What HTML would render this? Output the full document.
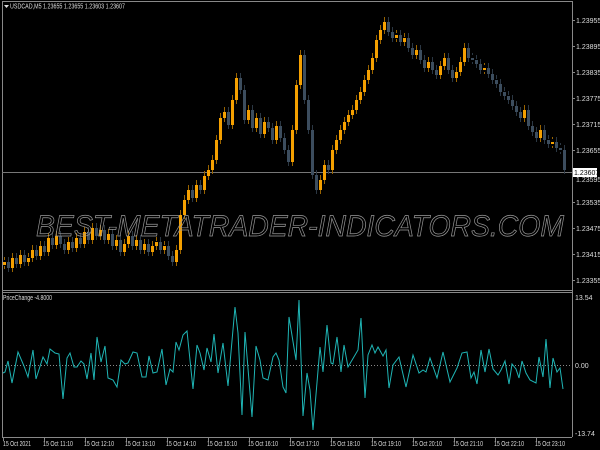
<!DOCTYPE html>
<html><head><meta charset="utf-8"><style>
html,body{margin:0;padding:0;background:#000;width:600px;height:450px;overflow:hidden}
svg{display:block}
text{font-family:"Liberation Sans",sans-serif;font-size:7px;fill:#ddd}
</style></head><body>
<svg width="600" height="450" viewBox="0 0 600 450">
<rect width="600" height="450" fill="#000"/>
<g fill="none" stroke="#888" stroke-width="1">
<line x1="2" y1="1.5" x2="572" y2="1.5"/>
<line x1="2.5" y1="1" x2="2.5" y2="437"/>
<line x1="572.5" y1="1" x2="572.5" y2="437"/>
<line x1="2" y1="290.5" x2="572" y2="290.5"/>
<line x1="2" y1="292.5" x2="572" y2="292.5"/>
<line x1="2" y1="437.5" x2="572" y2="437.5"/>
<line x1="2" y1="172.5" x2="572" y2="172.5" stroke="#777"/>
<path d="M572 20.5h3M572 46.5h3M572 72.5h3M572 98.5h3M572 124.5h3M572 150.5h3M572 176.5h3M572 202.5h3M572 228.5h3M572 254.5h3M572 280.5h3"/>
<path d="M3.5 437v4M44.5 437v4M85.5 437v4M126.5 437v4M167.5 437v4M208.5 437v4M249.5 437v4M290.5 437v4M331.5 437v4M372.5 437v4M413.5 437v4M454.5 437v4M495.5 437v4M536.5 437v4"/>
</g>
<line x1="2" y1="365.5" x2="572" y2="365.5" stroke="#888" stroke-dasharray="1,2"/>

<defs>
<path id="po" d="M4 262V265M12 258V268M20 255V264M28 258V262M32 250V258M40 246V256M48 238V252M56 236V245M68 242V250M76 238V248M84 232V244M92 228V240M100 230V236M108 234V240M116 240V246M124 244V252M128 236V244M136 240V246M144 244V250M152 246V252M156 242V246M164 246V250M176 250V262M180 215V250M184 200V215M188 190V200M196 185V198M204 176V190M208 170V176M212 160V170M216 140V160M220 118V140M224 112V118M232 100V125M236 78V100M248 110V120M256 118V128M264 122V134M276 126V140M292 130V162M296 85V130M300 55V85M320 180V190M324 165V180M332 150V170M336 140V150M340 130V140M344 122V130M348 115V122M352 110V115M356 100V110M360 92V100M364 80V92M368 70V80M372 58V70M376 40V58M380 30V40M384 22V30M396 35V38M404 38V42M416 50V55M428 62V68M440 66V75M444 58V66M456 72V78M460 62V72M464 48V62M484 68V70M524 110V118M540 130V138M552 142V144"/>
<path id="pb" d="M8 262V268M16 258V264M24 255V262M36 250V256M44 246V252M52 238V245M60 236V244M64 244V250M72 242V248M80 238V244M88 232V240M96 228V236M104 230V240M112 234V246M120 240V252M132 236V246M140 240V250M148 244V252M160 242V250M168 246V256M172 256V262M192 190V198M200 185V190M228 112V125M240 78V90M244 90V120M252 110V128M260 118V134M268 122V128M272 128V140M280 126V138M284 138V150M288 150V162M304 55V100M308 100V130M312 130V175M316 175V190M328 165V170M388 22V32M392 32V38M400 35V42M408 38V48M412 48V55M420 50V60M424 60V68M432 62V70M436 70V75M448 58V70M452 70V78M468 48V58M472 58V60M476 60V64M480 64V70M488 68V74M492 74V80M496 80V84M500 84V92M504 92V96M508 96V100M512 100V106M516 106V112M520 112V118M528 110V126M532 126V132M536 132V138M544 130V140M548 140V144M556 142V148M560 148V150M564 150V170"/>
</defs>
<g fill="none" stroke="#9a6400" stroke-width="1">
<use href="#po" transform="translate(0.5,-5)"/><use href="#po" transform="translate(0.5,4)"/>
</g>
<g fill="none" stroke="#2b3743" stroke-width="1">
<use href="#pb" transform="translate(0.5,-5)"/><use href="#pb" transform="translate(0.5,4)"/>
</g>
<g fill="none" stroke="#f5a000" stroke-width="3"><use href="#po" transform="translate(0.5,0)"/></g>
<g fill="none" stroke="#3c4d5e" stroke-width="3"><use href="#pb" transform="translate(0.5,0)"/></g>

<polyline fill="none" stroke="#1fb5b5" stroke-width="1" points="3,373 5,372 8,361 12,383 18,352 24,366 28,377 33,350 36,379 43,357 47,364 50,349 55,353 59,354 63,399 67,358 70,353 74,367 77,367 81,361 84,364 87,379 91,353 94,380 97,337 101,362 105,346 108,378 113,380 117,387 121,360 125,364 128,363 133,352 137,353 142,377 146,377 149,356 153,373 157,372 162,349 166,385 170,369 173,372 176,342 179,350 183,335 187,331 193,389 197,345 200,353 204,370 207,348 211,362 214,334 218,373 223,343 228,386 235,307 238,333 242,415 245,332 252,417 256,346 260,360 263,378 268,380 273,357 276,353 279,360 283,387 286,393 289,317 296,360 299,300 303,416 307,373 310,390 313,430 320,347 323,372 327,325 331,363 333,364 337,337 341,372 344,345 348,367 358,350 361,318 365,398 368,355 372,345 375,353 378,347 383,356 386,350 389,388 393,365 399,357 406,387 413,355 419,373 423,370 426,372 430,358 437,378 443,352 450,382 457,368 462,353 467,352 471,378 474,372 477,384 481,350 485,372 489,349 493,369 498,375 501,370 505,361 509,384 512,364 516,369 519,378 522,361 526,373 530,380 536,383 539,357 543,377 546,339 550,388 553,358 557,372 560,368 563,389"/>

<text x="36" y="236" textLength="528" lengthAdjust="spacingAndGlyphs" style="fill:none;stroke:#999;stroke-width:0.7;font-size:30px;font-style:italic">BEST-METATRADER-INDICATORS.COM</text>
<path d="M4 5h5l-2.5 3z" fill="#ddd"/>
<text x="10" y="8.5" textLength="115" lengthAdjust="spacingAndGlyphs">USDCAD,M5  1.23655 1.23655 1.23603 1.23607</text>
<text x="3" y="300" textLength="49" lengthAdjust="spacingAndGlyphs">PriceChange -4.8000</text>
<g>
<text x="576" y="23">1.23955</text><text x="576" y="49">1.23895</text><text x="576" y="75">1.23835</text><text x="576" y="101">1.23775</text><text x="576" y="127">1.23715</text><text x="576" y="153">1.23655</text><text x="576" y="182">1.23595</text><text x="576" y="205">1.23535</text><text x="576" y="231">1.23475</text><text x="576" y="257">1.23415</text><text x="576" y="283">1.23355</text>
</g>
<rect x="573" y="168" width="24" height="9" fill="#fff"/>
<text x="574" y="175" style="fill:#000">1.23607</text>
<text x="575" y="300">13.54</text>
<text x="575" y="368">0.00</text>
<text x="575" y="436">-13.74</text>
<g>
<text x="3" y="446" textLength="28" lengthAdjust="spacingAndGlyphs">15 Oct 2021</text>
<text x="43" y="446" textLength="30" lengthAdjust="spacingAndGlyphs">15 Oct 11:10</text>
<text x="84" y="446" textLength="30" lengthAdjust="spacingAndGlyphs">15 Oct 12:10</text>
<text x="125" y="446" textLength="30" lengthAdjust="spacingAndGlyphs">15 Oct 13:10</text>
<text x="166" y="446" textLength="30" lengthAdjust="spacingAndGlyphs">15 Oct 14:10</text>
<text x="207" y="446" textLength="30" lengthAdjust="spacingAndGlyphs">15 Oct 15:10</text>
<text x="248" y="446" textLength="30" lengthAdjust="spacingAndGlyphs">15 Oct 16:10</text>
<text x="289" y="446" textLength="30" lengthAdjust="spacingAndGlyphs">15 Oct 17:10</text>
<text x="330" y="446" textLength="30" lengthAdjust="spacingAndGlyphs">15 Oct 18:10</text>
<text x="371" y="446" textLength="30" lengthAdjust="spacingAndGlyphs">15 Oct 19:10</text>
<text x="412" y="446" textLength="30" lengthAdjust="spacingAndGlyphs">15 Oct 20:10</text>
<text x="453" y="446" textLength="30" lengthAdjust="spacingAndGlyphs">15 Oct 21:10</text>
<text x="494" y="446" textLength="30" lengthAdjust="spacingAndGlyphs">15 Oct 22:10</text>
<text x="535" y="446" textLength="30" lengthAdjust="spacingAndGlyphs">15 Oct 23:10</text>
</g>
</svg>
</body></html>
